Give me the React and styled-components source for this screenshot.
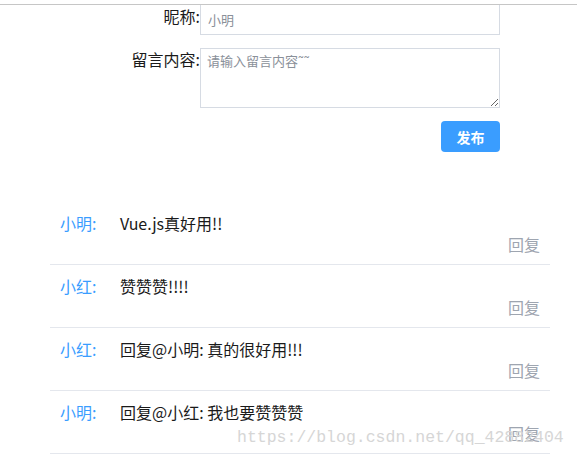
import React from "react"
import styled, { createGlobalStyle } from "styled-components"

const GlobalStyle = createGlobalStyle`
  body {
    margin: 0;
    background: #fff;
    font-family: "Noto Sans CJK SC", "Noto Sans", sans-serif;
  }
`

const comments = [
  { name: "小明", text: "Vue.js真好用!!" },
  { name: "小红", text: "赞赞赞!!!!" },
  { name: "小红", text: "回复@小明: 真的很好用!!!" },
  { name: "小明", text: "回复@小红: 我也要赞赞赞" },
]

const App = () => {
  return (
    <Page>
      <GlobalStyle />
      <Form>
        <Row>
          <Label>昵称:</Label>
          <Input placeholder="小明" />
        </Row>
        <Row>
          <Label>留言内容:</Label>
          <TextArea placeholder="请输入留言内容˜˜" />
        </Row>
        <Actions>
          <Button>发布</Button>
        </Actions>
      </Form>
      <List>
        {comments.map((c, i) => (
          <Item key={i}>
            <Line>
              <Name>{c.name}:</Name>
              <Content>{c.text}</Content>
            </Line>
            <Reply>回复</Reply>
          </Item>
        ))}
      </List>
      <Watermark>https://blog.csdn.net/qq_42882404</Watermark>
    </Page>
  )
}

export default App

const Page = styled.div`
  position: relative;
  width: 577px;
  height: 458px;
  overflow: hidden;
  margin-top: 4px;
  border-top: 1px solid #c6c6c6;
  box-sizing: border-box;
`

const Form = styled.div`
  width: 500px;
  display: flex;
  flex-direction: column;
  gap: 13px;
`

const Row = styled.div`
  display: flex;
  align-items: flex-start;
`

const Label = styled.label`
  width: 200px;
  text-align: right;
  font-size: 16px;
  line-height: 22px;
  color: #1a1a1a;
  flex-shrink: 0;
`

const Input = styled.input`
  width: 300px;
  height: 31px;
  box-sizing: border-box;
  border: 1px solid #d6dbe3;
  border-top-color: transparent;
  margin-top: -1px;
  padding: 0 7px;
  font-family: inherit;
  font-size: 13px;
  outline: none;
  &::placeholder {
    color: #8a9099;
  }
`

const TextArea = styled.textarea`
  display: block;
  width: 300px;
  height: 60px;
  box-sizing: border-box;
  border: 1px solid #d6dbe3;
  padding: 2px 6px;
  font-family: inherit;
  font-size: 13px;
  outline: none;
  margin: 0;
  &::placeholder {
    color: #8a9099;
  }
`

const Actions = styled.div`
  display: flex;
  justify-content: flex-end;
`

const Button = styled.button`
  width: 59px;
  height: 31px;
  border: none;
  border-radius: 4px;
  background: #3a9dff;
  color: #fff;
  font-family: inherit;
  font-size: 14px;
  font-weight: 600;
  cursor: pointer;
`

const List = styled.div`
  width: 500px;
  margin: 50px 0 0 50px;
`

const Item = styled.div`
  height: 63px;
  box-sizing: border-box;
  padding: 10px 10px 0;
  border-bottom: 1px solid #e4e7ed;
  display: flex;
  flex-direction: column;
`

const Line = styled.div`
  display: flex;
  font-size: 16px;
  line-height: 22px;
`

const Name = styled.span`
  width: 60px;
  color: #3a9dff;
`

const Content = styled.span`
  color: #1a1a1a;
`

const Reply = styled.span`
  align-self: flex-end;
  font-size: 16px;
  line-height: 22px;
  color: #9ea5b0;
  margin-top: -1px;
`

const Watermark = styled.div`
  position: absolute;
  left: 237px;
  top: 423px;
  white-space: nowrap;
  font-family: "Liberation Mono", monospace;
  font-size: 16.5px;
  color: #d6d6d6;
  pointer-events: none;
`
